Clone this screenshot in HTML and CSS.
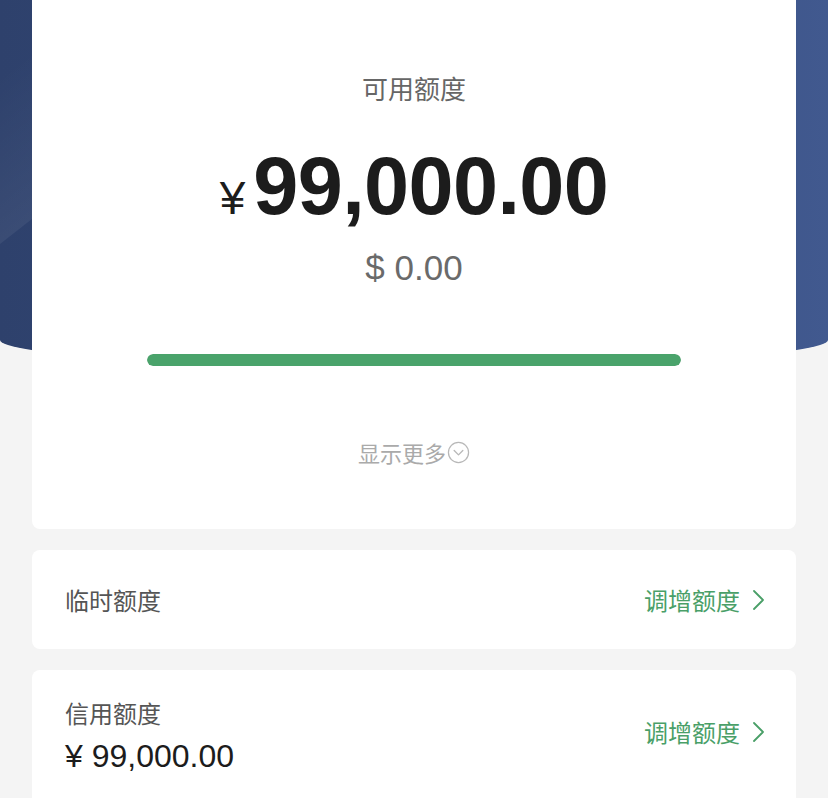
FILE: index.html
```html
<!DOCTYPE html>
<html lang="zh">
<head>
<meta charset="utf-8">
<link rel="stylesheet" href="styles.css">
</head>
<body>
<div class="page">
  <div class="hero"><div class="hero-shine"></div></div>
  <div class="content">
    <section class="card main-card">
      <div class="label">可用额度</div>
      <div class="amount"><span class="yen">¥</span><span class="num">99,000.00</span></div>
      <div class="usd">$ 0.00</div>
      <div class="bar"><div class="bar-fill" style="width:100%"></div></div>
      <div class="more">显示更多<svg class="more-icon" viewBox="0 0 24 24" width="23" height="23"><circle cx="12" cy="12" r="10.5" fill="none" stroke="#b8b8b8" stroke-width="1.3"/><path d="M7.5 10 L12 14.5 L16.5 10" fill="none" stroke="#b8b8b8" stroke-width="1.4" stroke-linecap="round" stroke-linejoin="round"/></svg></div>
    </section>
    <section class="card row-card">
      <div class="row-title">临时额度</div>
      <div class="action">调增额度<svg class="chev" viewBox="0 0 16 24" width="16" height="24"><path d="M4 3 L13 12 L4 21" fill="none" stroke="#4a9f68" stroke-width="1.8" stroke-linecap="round" stroke-linejoin="round"/></svg></div>
    </section>
    <section class="card row-card tall">
      <div class="col">
        <div class="row-title">信用额度</div>
        <div class="row-amount">¥ 99,000.00</div>
      </div>
      <div class="action">调增额度<svg class="chev" viewBox="0 0 16 24" width="16" height="24"><path d="M4 3 L13 12 L4 21" fill="none" stroke="#4a9f68" stroke-width="1.8" stroke-linecap="round" stroke-linejoin="round"/></svg></div>
    </section>
  </div>
</div>
</body>
</html>
```
FILE: styles.css
```css
* { box-sizing: border-box; }
html, body { margin: 0; padding: 0; }
body {
  background: #f4f4f4;
  font-family: "Liberation Sans", "Noto Sans CJK SC", sans-serif;
  width: 828px;
  height: 798px;
  overflow: hidden;
}
.page { position: relative; }
.hero {
  position: absolute;
  left: 0; top: 0;
  width: 828px;
  height: 366px;
  background: linear-gradient(90deg, #2e416c 0%, #34497a 50%, #41598f 100%);
  border-radius: 0 0 50% 50% / 0 0 26px 26px;
  overflow: hidden;
}
.hero-shine {
  position: absolute;
  left: -120px; top: 70px;
  width: 250px; height: 170px;
  background: linear-gradient(180deg, rgba(255,255,255,0.0), rgba(255,255,255,0.06));
  transform: skewY(-38deg);
}
.content {
  position: relative;
  padding: 0 32px;
  display: flex;
  flex-direction: column;
  gap: 21px;
}
.card {
  background: #fff;
  border-radius: 8px;
}
.main-card {
  height: 529px;
  border-radius: 0 0 8px 8px;
  display: flex;
  flex-direction: column;
  align-items: center;
  padding-top: 70px;
}
.label {
  font-family: "Noto Sans CJK SC", sans-serif;
  font-size: 26px;
  line-height: 36px;
  color: #666;
}
.amount {
  margin-top: 32px;
  display: flex;
  align-items: baseline;
  color: #1c1c1c;
  height: 96px;
}
.yen {
  font-size: 46px;
  margin-right: 8px;
}
.num {
  font-size: 81px;
  font-weight: 700;
  letter-spacing: -0.6px;
  line-height: 96px;
}
.usd {
  margin-top: 12px;
  font-size: 35px;
  line-height: 44px;
  color: #6a6a6a;
}
.bar {
  margin-top: 64px;
  width: 534px;
  height: 12px;
  border-radius: 6px;
  background: #e8e8e8;
  overflow: hidden;
}
.bar-fill {
  height: 100%;
  background: #4aa36b;
  border-radius: 6px;
}
.more {
  margin-top: 70px;
  display: flex;
  align-items: center;
  font-family: "Noto Sans CJK SC", sans-serif;
  font-size: 22px;
  line-height: 32px;
  color: #aaa;
}
.more-icon { margin-left: 1px; }
.row-card {
  height: 99px;
  display: flex;
  align-items: center;
  justify-content: space-between;
  padding: 0 30px 0 33px;
}
.row-card.tall { height: 140px; align-items: flex-start; padding-top: 26px; }
.row-card.tall .action { margin-top: 19px; }
.row-title {
  font-family: "Noto Sans CJK SC", sans-serif;
  font-size: 24px;
  line-height: 34px;
  color: #555;
}
.row-amount {
  margin-top: 6px;
  font-size: 32px;
  line-height: 40px;
  color: #1c1c1c;
}
.action {
  display: flex;
  align-items: center;
  gap: 10px;
  font-family: "Noto Sans CJK SC", sans-serif;
  font-size: 24px;
  line-height: 34px;
  color: #4a9f68;
}
```
